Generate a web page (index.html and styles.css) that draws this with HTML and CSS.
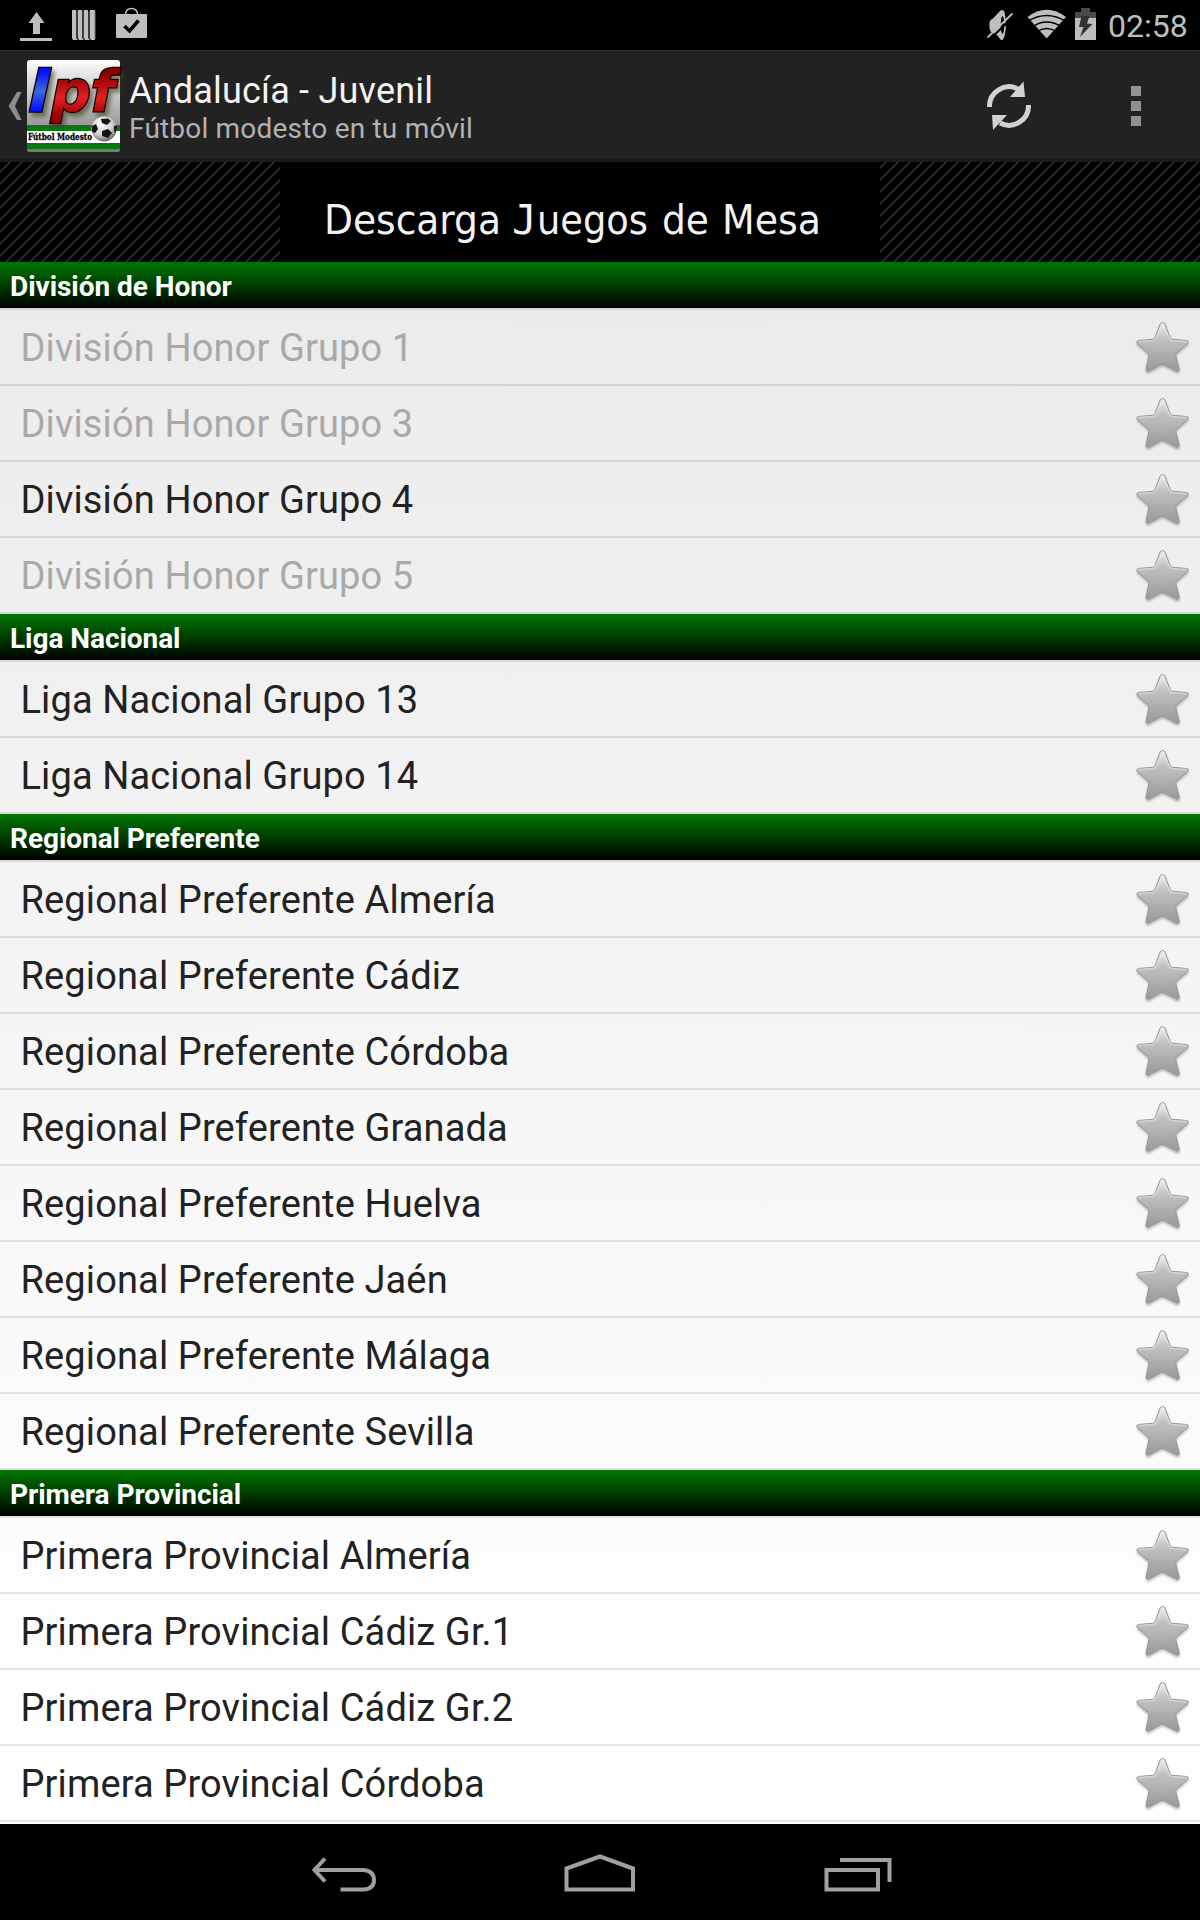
FILE: index.html
```html
<!DOCTYPE html>
<html lang="es">
<head>
    <meta charset="UTF-8">
    <meta name="viewport" content="width=device-width, initial-scale=1.0">
    <title>Andalucía - Juvenil</title>
    <link rel="stylesheet" href="styles.css">
</head>
<body>

<!-- shared star shape -->
<svg class="defs" width="0" height="0">
    <defs>
        <linearGradient id="starFill" x1="0" y1="0" x2="0" y2="1">
            <stop offset="0" stop-color="#eeeeee"/>
            <stop offset="0.35" stop-color="#c0c0c0"/>
            <stop offset="1" stop-color="#999"/>
        </linearGradient>
        <symbol id="star" viewBox="0 0 60 60">
            <path d="M29.6 6.5Q31.300 6.500 32 8L37 21.500Q38 23 39.500 23.300L54 24.500Q56.500 25.500 54.500 27.500L43.500 37Q42.500 38 42.800 39.500L46.300 53Q46.400 56 43.500 55L31.500 48.800Q29.500 48 27.500 48.800L16 55Q13 56 13 53L16 39.500Q16.300 38 15.300 37L4.500 27.500Q2.800 25.500 5 24.500L19.700 23.300Q21.200 23 22.200 21.500L27.200 8Q28 6.500 29.600 6.500Z" fill="url(#starFill)" stroke="#969696" stroke-width="1"/>
            <path d="M5 25.500L20 24.500Q22 24 23 22L29.600 8L36.200 22Q37 24 39 24.500L54 25.500" fill="none" stroke="#f0f0f0" stroke-opacity="0.45" stroke-width="1.500"/>
        </symbol>
    </defs>
</svg>

<div class="status-bar">
    <svg width="160" height="50" viewBox="0 0 160 50" fill="#bebebe">
        <path d="M36.500 12L44.500 23H40V34H33V23H28.500ZM20 38H52V41H20Z"/>
        <path d="M72 10H76V38L78 40H73L72 38ZM78 10H82V38L84 40H79L78 38ZM84 10H88V38L90 40H85L84 38ZM90 10H95V40H91L90 38Z"/>
        <path d="M77 11V39M83 11V39M89 11V39M95 11V39" stroke="#777" stroke-width="1"/>
        <path d="M117 14H146Q147 14 147 15V37Q147 38 146 38H117Q116 38 116 37V15Q116 14 117 14Z"/>
        <path d="M125.500 14Q126 8.500 131.500 8.500T137.500 14" fill="none" stroke="#bebebe" stroke-width="1.500"/>
        <path d="M124.500 26L129.500 31L138.500 20.500" fill="none" stroke="#000" stroke-width="3.500"/>
    </svg>
    <div class="status-right">
        <svg width="120" height="50" viewBox="0 0 120 50" fill="#bebebe">
            <path d="M9.500 23Q9.800 19.500 13 18.500L20 11Q23 8.500 24.500 12Q27 24 25 34Q23.500 41 21 40L17 35L11 32Q9 29 9.500 23Z"/>
            <ellipse cx="22.500" cy="25" rx="1.800" ry="9" fill="#000"/>
            <path d="M9 40L34 16" stroke="#000" stroke-width="2"/>
            <path d="M7.500 37.500L32.500 13.500" stroke="#bebebe" stroke-width="1.800"/>
            <path d="M66.700 38.500L47.500 17Q57 9.700 66.700 9.700T86 17Z"/>
            <path d="M47.500 21.500Q66.700 9.500 86 21.500M52 27Q66.700 17 82 27M56.500 32Q66.700 25 77 32" fill="none" stroke="#000" stroke-width="1.500"/>
            <path d="M95 12H101V8H110V12H116V18H95Z" fill="#4a4a4a"/>
            <path d="M95 18H116V40H95Z"/>
            <path d="M101.500 16H109.500L107 23.500L112.500 24L100 37L103.500 27H99Z" fill="#333"/>
        </svg>
        <span class="clock">02:58</span>
    </div>
</div>

<header class="action-bar">
    <svg class="back" width="14" height="30" viewBox="0 0 14 30"><path d="M9 1H13.500L7 15L13.500 29H9L0.500 15Z" fill="#8c8c8c"/></svg>
    <svg class="logo" width="96" height="96" viewBox="0 0 96 96">
        <defs>
            <linearGradient id="logoBg" x1="0" y1="0" x2="0" y2="1">
                <stop offset="0" stop-color="#fff"/>
                <stop offset="0.7" stop-color="#999"/>
            </linearGradient>
            <linearGradient id="blue" x1="0" y1="0" x2="0" y2="1">
                <stop offset="0.2" stop-color="#0010ff"/>
                <stop offset="0.5" stop-color="#3c68e0"/>
                <stop offset="0.8" stop-color="#0010ff"/>
            </linearGradient>
            <linearGradient id="red" x1="0" y1="0" x2="0" y2="1">
                <stop offset="0.25" stop-color="#8a0000"/>
                <stop offset="0.6" stop-color="#e52020"/>
                <stop offset="0.9" stop-color="#900000"/>
            </linearGradient>
            <radialGradient id="ball" cx="0.4" cy="0.3" r="0.75">
                <stop offset="0" stop-color="#fff"/>
                <stop offset="0.6" stop-color="#ccc"/>
                <stop offset="1" stop-color="#555"/>
            </radialGradient>
            <clipPath id="logoClip"><rect x="1" y="2" width="93" height="92" rx="3"/></clipPath>
        </defs>
        <g clip-path="url(#logoClip)">
            <rect width="96" height="96" fill="url(#logoBg)"/>
            <rect y="67" width="96" height="24" fill="#067a10"/>
            <rect y="73" width="96" height="12" fill="#fff"/>
            <rect y="91" width="96" height="4" fill="#777"/>
        </g>
        <g class="logo-letters">
            <text x="2" y="53" fill="url(#blue)" textLength="22" lengthAdjust="spacingAndGlyphs">l</text>
            <text x="25" y="53" fill="url(#red)" textLength="64" lengthAdjust="spacingAndGlyphs">pf</text>
        </g>
        <text class="logo-caption" x="2" y="82" textLength="64" lengthAdjust="spacingAndGlyphs">Fútbol Modesto</text>
        <circle cx="78" cy="71" r="12.500" fill="url(#ball)"/>
        <path d="M75 61L82 60.500L85 63L81 67L76 65ZM76 73L82 71L86 75L82 80L76 78ZM66 68L70 66L72 71L69 75L66 74ZM88 68L91 68L90 75L88 73Z" fill="#151515"/>
    </svg>
    <div class="titles">
        <h1>Andalucía - Juvenil</h1>
        <p>Fútbol modesto en tu móvil</p>
    </div>
    <svg class="refresh" width="50" height="52" viewBox="0 0 50 52">
        <path d="M5.500 27A19.500 19.500 0 0 1 34 9M44.500 25A19.500 19.500 0 0 1 16 43" fill="none" stroke="#d2d2d2" stroke-width="5"/>
        <path d="M39.500 1.500L41 17H26ZM9 50L8 35H23Z" fill="#d2d2d2"/>
    </svg>
    <div class="overflow"><i></i><i></i><i></i></div>
</header>

<div class="ad">
    <svg class="ad-box" width="600" height="100">
        <text x="44" y="72" textLength="177" lengthAdjust="spacingAndGlyphs">Descarga</text>
        <text y="72"><tspan class="mono" x="232">J</tspan><tspan x="257" textLength="111" lengthAdjust="spacingAndGlyphs">uegos</tspan></text>
        <text x="382" y="72" textLength="47" lengthAdjust="spacingAndGlyphs">de</text>
        <text x="442" y="72" textLength="99" lengthAdjust="spacingAndGlyphs">Mesa</text>
    </svg>
</div>

<main class="list" id="list"></main>

<nav class="nav-bar">
    <svg width="640" height="96" viewBox="280 1824 640 96" fill="none" stroke="#a0a0a0" stroke-width="4">
        <path d="M325 1858.500L314.500 1870L325 1881.500M315 1870H363.500Q374 1871 374 1880T363.500 1889.500H340.500"/>
        <path d="M566.500 1889.500V1868.500L600 1856.500L633 1868.500V1889.500Z"/>
        <path d="M826.500 1870H878V1889.500H826.500ZM840 1860H889.500V1882"/>
    </svg>
</nav>

<script>
const sections = [
    { title: "División de Honor", rows: ["División Honor Grupo 1", "División Honor Grupo 3", "División Honor Grupo 4", "División Honor Grupo 5"], off: [0, 1, 3] },
    { title: "Liga Nacional", rows: ["Liga Nacional Grupo 13", "Liga Nacional Grupo 14"] },
    { title: "Regional Preferente", rows: ["Almería", "Cádiz", "Córdoba", "Granada", "Huelva", "Jaén", "Málaga", "Sevilla"].map(p => "Regional Preferente " + p) },
    { title: "Primera Provincial", rows: ["Almería", "Cádiz Gr.1", "Cádiz Gr.2", "Córdoba"].map(p => "Primera Provincial " + p) }
];

document.getElementById("list").innerHTML = sections.map(s => `
    <h2>${s.title}</h2>
    <ul>${s.rows.map((r, i) => `
        <li class="${(s.off || []).includes(i) ? "disabled" : ""}"><span>${r}</span><svg class="star"><use href="#star"/></svg></li>`).join("")}
    </ul>`).join("");
</script>

</body>
</html>
```

FILE: styles.css
```css
body {
    margin: 0;
    width: 1200px;
    height: 1920px;
    display: flex;
    flex-direction: column;
    overflow: hidden;
    background-color: #000;
    font-family: Roboto, sans-serif;
}

svg {
    display: block;
    flex: none;
}

.defs {
    position: absolute;
}

.status-bar {
    height: 50px;
    display: flex;
    justify-content: space-between;
    color: #bebebe;
}

.status-right {
    display: flex;
    width: 220px;
}

.clock {
    font-size: 32px;
    line-height: 52px;
    margin-left: 8px;
}

.action-bar {
    height: 112px;
    box-sizing: border-box;
    padding-top: 2px;
    display: flex;
    align-items: center;
    background-color: #222;
    border-top: 1px solid #303030;
    border-bottom: 3px solid #1a1a1a;
}

.back {
    margin-left: 8px;
}

.logo {
    margin-left: 4px;
    overflow: visible;
}

.logo-letters {
    font: italic bold 57px "DejaVu Sans", sans-serif;
    stroke: #100000;
    stroke-width: 2.5px;
    paint-order: stroke;
    filter: drop-shadow(3px 4px 2px rgba(60, 60, 30, 0.6));
}

.logo-caption {
    font: bold 9px "DejaVu Serif", serif;
    stroke: #000;
    stroke-width: 0.3px;
}

.titles {
    flex: 1;
    margin-left: 7px;
    padding-top: 6px;
}

.titles h1 {
    margin: 0;
    font-size: 36px;
    font-weight: 400;
    line-height: 39px;
    letter-spacing: 0.2px;
    color: #f3f3f3;
}

.titles p {
    margin: 0;
    font-size: 28px;
    line-height: 35px;
    letter-spacing: 0.2px;
    color: #b2b2b2;
}

.refresh {
    margin-right: 97px;
}

.overflow {
    display: flex;
    flex-direction: column;
    gap: 5px;
    margin-right: 59px;
}

.overflow i {
    width: 10px;
    height: 10px;
    background-color: #919191;
}

.ad {
    height: 100px;
    display: flex;
    justify-content: center;
    padding-right: 40px;
    background: repeating-linear-gradient(135deg, #000 0 5.5px, #262626 6.5px 8px, #000 8.485px);
}

.ad-box {
    background-color: #000;
}

.ad text {
    font: 41px "DejaVu Sans", sans-serif;
    fill: #f2f2f2;
}

.ad .mono {
    font-family: "DejaVu Sans Mono", monospace;
}

.list {
    height: 1562px;
    background: linear-gradient(#ebebeb, #fff 95%);
}

.list h2 {
    margin: 0;
    height: 46px;
    padding-left: 10px;
    font-size: 28px;
    font-weight: 700;
    line-height: 49px;
    letter-spacing: -0.05px;
    color: #fff;
    background: linear-gradient(#007800, #000);
}

.list ul {
    margin: 0;
    padding: 0;
    list-style: none;
    border-top: 2px solid rgba(0, 0, 0, 0.1);
}

.list li {
    height: 74px;
    display: flex;
    align-items: center;
    justify-content: space-between;
    padding: 0 7px 0 20.5px;
    border-bottom: 2px solid rgba(0, 0, 0, 0.1);
    font-size: 38px;
    letter-spacing: 0.13px;
    color: #222;
}

.list li span {
    padding-top: 2px;
}

.list li.disabled {
    color: #a9a9a9;
}

.star {
    width: 60px;
    height: 60px;
    margin-bottom: 3px;
    filter: drop-shadow(0 2px 1px rgba(0, 0, 0, 0.25));
}

.nav-bar {
    height: 96px;
    display: flex;
    justify-content: center;
    background-color: #000;
}
```
